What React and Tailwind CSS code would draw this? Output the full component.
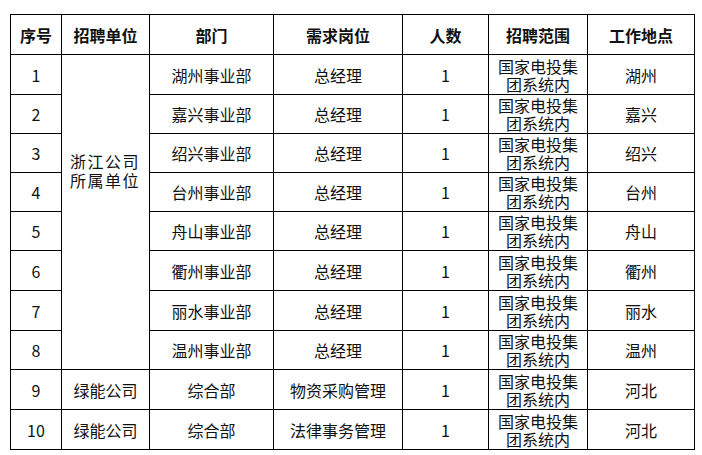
const rows = [
  { no: '1', dept: '湖州事业部', post: '总经理', place: '湖州', h: 'h-[40px]' },
  { no: '2', dept: '嘉兴事业部', post: '总经理', place: '嘉兴', h: 'h-[39px]' },
  { no: '3', dept: '绍兴事业部', post: '总经理', place: '绍兴', h: 'h-[39px]' },
  { no: '4', dept: '台州事业部', post: '总经理', place: '台州', h: 'h-[39px]' },
  { no: '5', dept: '舟山事业部', post: '总经理', place: '舟山', h: 'h-[39px]' },
  { no: '6', dept: '衢州事业部', post: '总经理', place: '衢州', h: 'h-[40px]' },
  { no: '7', dept: '丽水事业部', post: '总经理', place: '丽水', h: 'h-[40px]' },
  { no: '8', dept: '温州事业部', post: '总经理', place: '温州', h: 'h-[39px]' },
  { no: '9', unit: '绿能公司', dept: '综合部', post: '物资采购管理', place: '河北', h: 'h-[40px]' },
  { no: '10', unit: '绿能公司', dept: '综合部', post: '法律事务管理', place: '河北', h: 'h-[40px]' },
];

const headers = ['序号', '招聘单位', '部门', '需求岗位', '人数', '招聘范围', '工作地点'];

export default function App() {
  const cell = 'border border-black text-center align-middle p-0';

  return (
    <div
      className="w-[702px] h-[455px] bg-white pt-[14px] pl-[10px] text-[16px] text-[#111]"
      style={{ fontFamily: '"Noto Sans CJK SC", sans-serif' }}
    >
      <table className="border-collapse table-fixed w-[684px]">
        <colgroup>
          <col className="w-[51px]" />
          <col className="w-[88px]" />
          <col className="w-[124px]" />
          <col className="w-[129px]" />
          <col className="w-[86px]" />
          <col className="w-[99px]" />
          <col className="w-[107px]" />
        </colgroup>
        <thead>
          <tr className="h-[40px]">
            {headers.map((h) => (
              <th key={h} className={`${cell} font-bold`}>
                {h}
              </th>
            ))}
          </tr>
        </thead>
        <tbody>
          {rows.map((r, i) => (
            <tr key={r.no} className={r.h}>
              <td className={cell}>{r.no}</td>
              {i === 0 && (
                <td rowSpan={8} className="border border-black align-top text-left pl-[8px] pt-[97px] leading-[19px] tracking-[1.5px]">
                  浙江公司
                  <br />
                  所属单位
                </td>
              )}
              {r.unit && <td className={cell}>{r.unit}</td>}
              <td className={cell}>{r.dept}</td>
              <td className={cell}>{r.post}</td>
              <td className={cell}>1</td>
              <td className={`${cell} leading-[18px]`}>
                国家电投集
                <br />
                团系统内
              </td>
              <td className={cell}>{r.place}</td>
            </tr>
          ))}
        </tbody>
      </table>
    </div>
  );
}
